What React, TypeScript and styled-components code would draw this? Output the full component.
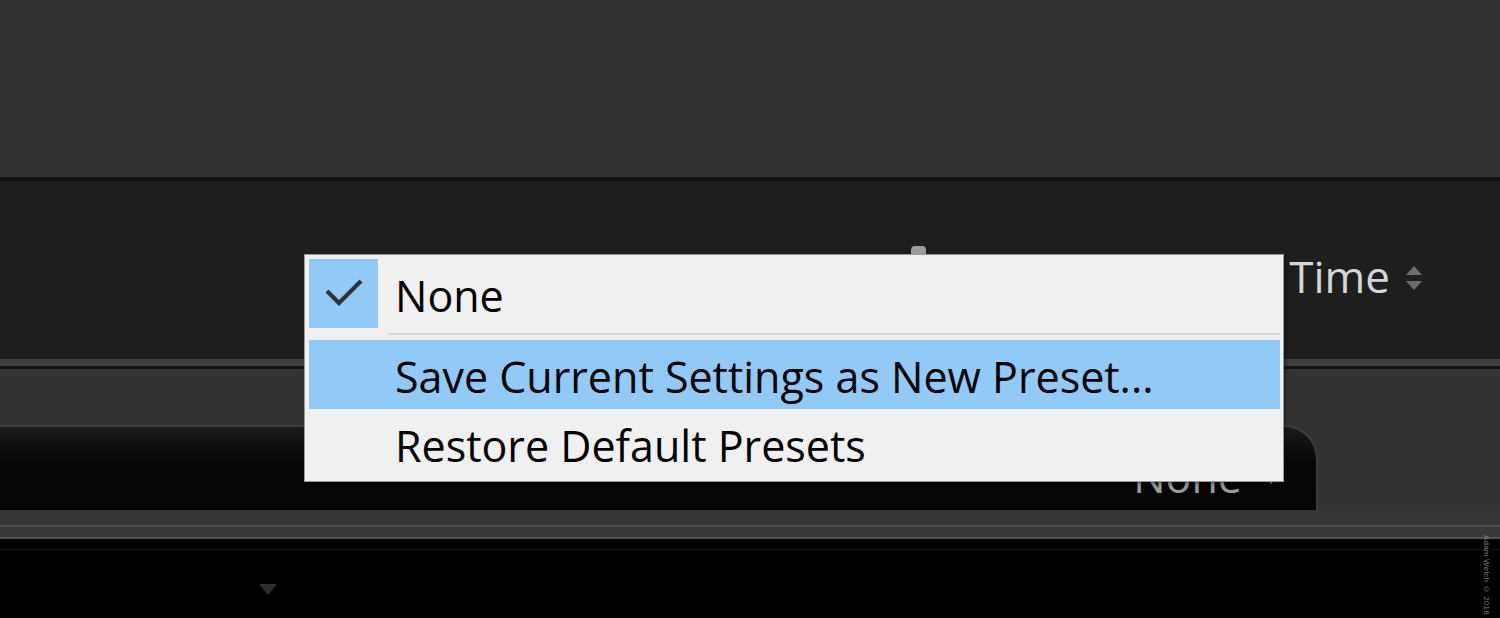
import React from 'react';
import styled, { createGlobalStyle } from 'styled-components';

const GlobalStyle = createGlobalStyle`
	html, body {
		margin: 0;
		padding: 0;
		background: #000;
		overflow: hidden;
	}
	body {
		font-family: "Open Sans", "Noto Sans", "DejaVu Sans", sans-serif;
	}
`;

const Page = styled.div`
	position: relative;
	width: 1500px;
	height: 618px;
	display: flex;
	flex-direction: column;
	overflow: hidden;
	background: #000;
`;

const TopArea = styled.div`
	height: 177px;
	background: #333333;
`;

const Rule = styled.div<{ $h: number; $c: string }>`
	height: ${p => p.$h}px;
	background: ${p => p.$c};
	flex-shrink: 0;
`;

const Toolbar = styled.div`
	height: 178px;
	background: #1e1e1e;
	display: flex;
	justify-content: flex-end;
	align-items: flex-start;
	padding: 67px 78px 0 0;
	box-sizing: border-box;
`;

const SortLabel = styled.div`
	display: flex;
	align-items: center;
	gap: 16px;
	font-size: 44px;
	color: #d6d6d6;
	line-height: 56px;
`;

const UpDown = styled.div`
	display: flex;
	flex-direction: column;
	gap: 6px;
	margin-top: 4px;
`;

const Tri = styled.div<{ $dir: 'up' | 'down'; $c: string; $w: number }>`
	width: 0;
	height: 0;
	border-left: ${p => p.$w / 2}px solid transparent;
	border-right: ${p => p.$w / 2}px solid transparent;
	${p => p.$dir === 'up'
		? `border-bottom: ${p.$w * 0.62}px solid ${p.$c};`
		: `border-top: ${p.$w * 0.62}px solid ${p.$c};`}
`;

const Panel = styled.div`
	height: 141px;
	background: #333333;
	padding-top: 56px;
	box-sizing: border-box;
`;

const PresetBox = styled.div`
	width: 1318px;
	height: 85px;
	background: linear-gradient(#1b1b1b, #070707 45%, #050505);
	border-top-right-radius: 32px;
	box-shadow: inset -2px 2px 0 #3c3c3c;
	display: flex;
	justify-content: flex-end;
	align-items: flex-end;
	padding: 0 40px 8px 0;
	box-sizing: border-box;
	gap: 22px;
`;

const PresetValue = styled.span`
	font-size: 43px;
	line-height: 50px;
	color: #9a9a9a;
`;

const PresetArrow = styled.div`
	margin-bottom: 18px;
`;

const Footer = styled.div`
	flex: 1;
	background: #000;
	display: flex;
	flex-direction: column;
`;

const FooterBody = styled.div`
	flex: 1;
	padding: 34px 0 0 259px;
`;

const Watermark = styled.div`
	position: absolute;
	right: 9px;
	top: 535px;
	writing-mode: vertical-rl;
	font-family: "Liberation Sans", Arial, sans-serif;
	font-size: 8px;
	color: #7a7a7a;
	letter-spacing: 0.2px;
`;

const SliderThumb = styled.div`
	position: absolute;
	left: 911px;
	top: 246px;
	width: 15px;
	height: 10px;
	background: #9c9c9c;
	border-radius: 4px 4px 0 0;
`;

const Menu = styled.div`
	position: absolute;
	left: 304px;
	top: 254px;
	width: 980px;
	height: 228px;
	box-sizing: border-box;
	background: #f0f0f0;
	border: 1px solid #9a9a9a;
	padding: 4px 3px 4px 4px;
	display: flex;
	flex-direction: column;
	box-shadow: 2px 2px 3px rgba(0, 0, 0, 0.35);
`;

const MenuItem = styled.div<{ $active?: boolean }>`
	height: 69px;
	display: flex;
	align-items: center;
	background: ${p => (p.$active ? '#91c9f7' : 'transparent')};
	font-size: 43px;
	color: #000;
	flex-shrink: 0;
`;

const CheckCell = styled.div<{ $checked?: boolean }>`
	width: 69px;
	height: 100%;
	display: flex;
	align-items: center;
	justify-content: center;
	background: ${p => (p.$checked ? '#91c9f7' : 'transparent')};
	margin-right: 17px;
	flex-shrink: 0;
`;

const Separator = styled.div`
	height: 2px;
	margin: 5px 0 5px 79px;
	background: #d7d7d7;
	flex-shrink: 0;
`;

const MenuLabel = styled.span`
	white-space: nowrap;
	margin-top: 3px;
`;

const Check = () => (
	<svg width="40" height="30" viewBox="0 0 40 30">
		<path d="M3 12 L15 24 L37 2" fill="none" stroke="#333" strokeWidth="4.2" />
	</svg>
);

const App = () => {
	return <Page>
		<GlobalStyle />
		<TopArea />
		<Rule $h={4} $c="#121212" />
		<Toolbar>
			<SortLabel>
				Time
				<UpDown>
					<Tri $dir="up" $c="#6e6e6e" $w={16} />
					<Tri $dir="down" $c="#6e6e6e" $w={16} />
				</UpDown>
			</SortLabel>
		</Toolbar>
		<Rule $h={7} $c="#3d3d3d" />
		<Rule $h={3} $c="#141414" />
		<Panel>
			<PresetBox>
				<PresetValue>None</PresetValue>
				<PresetArrow><Tri $dir="down" $c="#9a9a9a" $w={15} /></PresetArrow>
			</PresetBox>
		</Panel>
		<Rule $h={15} $c="#363636" />
		<Rule $h={2} $c="#4c4c4c" />
		<Rule $h={10} $c="#383838" />
		<Rule $h={2} $c="#545454" />
		<Footer>
			<Rule $h={10} $c="#020202" />
			<Rule $h={1} $c="#151515" />
			<FooterBody>
				<Tri $dir="down" $c="#2c2c2c" $w={18} />
			</FooterBody>
		</Footer>
		<SliderThumb />
		<Menu>
			<MenuItem>
				<CheckCell $checked><Check /></CheckCell>
				<MenuLabel>None</MenuLabel>
			</MenuItem>
			<Separator />
			<MenuItem $active>
				<CheckCell />
				<MenuLabel>Save Current Settings as New Preset...</MenuLabel>
			</MenuItem>
			<MenuItem>
				<CheckCell />
				<MenuLabel>Restore Default Presets</MenuLabel>
			</MenuItem>
		</Menu>
		<Watermark>Adam Welch © 2018</Watermark>
	</Page>;
};

export default App;
